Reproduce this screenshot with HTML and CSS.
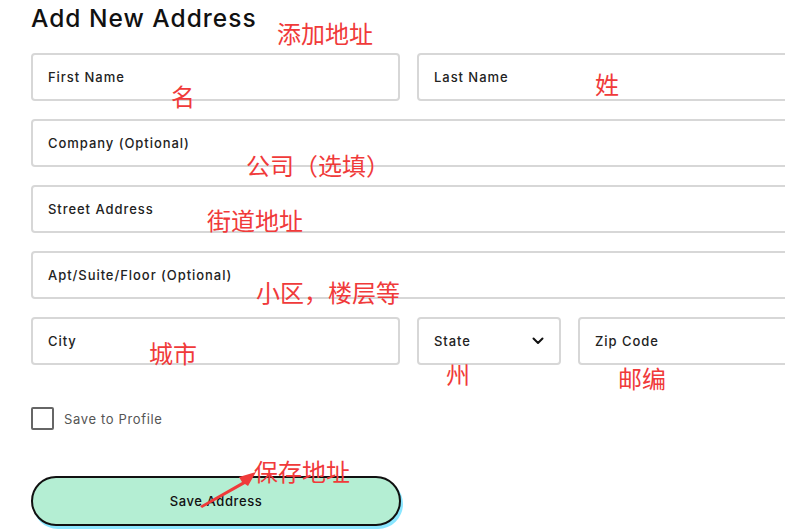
FILE: index.html
```html
<!DOCTYPE html>
<html lang="en">
<head>
<meta charset="utf-8">
<link rel="stylesheet" href="styles.css">
</head>
<body>
<div class="page">
  <h1 class="title">Add New Address</h1>
  <form class="form">
    <div class="row">
      <div class="field half"><span class="label">First Name</span></div>
      <div class="field grow"><span class="label">Last Name</span></div>
    </div>
    <div class="row">
      <div class="field grow"><span class="label">Company (Optional)</span></div>
    </div>
    <div class="row">
      <div class="field grow"><span class="label">Street Address</span></div>
    </div>
    <div class="row">
      <div class="field grow"><span class="label">Apt/Suite/Floor (Optional)</span></div>
    </div>
    <div class="row">
      <div class="field half"><span class="label">City</span></div>
      <div class="field state"><span class="label">State</span>
        <svg class="chev" width="12" height="8" viewBox="0 0 12 8"><path d="M1.5 1.5 L6 6 L10.5 1.5" fill="none" stroke="#111" stroke-width="2" stroke-linecap="round" stroke-linejoin="round"/></svg>
      </div>
      <div class="field grow"><span class="label">Zip Code</span></div>
    </div>
    <label class="check"><span class="box"></span><span class="check-label">Save to Profile</span></label>
    <div class="btn-wrap"><button type="button" class="save">Save Address</button></div>
  </form>

  <span class="note n1" lang="zh-CN">添加地址</span>
  <span class="note n2" lang="zh-CN">名</span>
  <span class="note n3" lang="zh-CN">姓</span>
  <span class="note n4" lang="zh-CN">公司<span class="paren">（</span>选填<span class="paren">）</span></span>
  <span class="note n5" lang="zh-CN">街道地址</span>
  <span class="note n6" lang="zh-CN">小区，楼层等</span>
  <span class="note n7" lang="zh-CN">城市</span>
  <span class="note n8" lang="zh-CN">州</span>
  <span class="note n9" lang="zh-CN">邮编</span>
  <span class="note n10" lang="zh-CN">保存地址</span>
  <svg class="arrow" width="70" height="45" viewBox="0 0 70 45">
    <polygon points="3,41 45,17 42,12 59,7 51,21 48,19 5,43" fill="#f03a3a"/>
  </svg>
</div>
</body>
</html>
```

FILE: styles.css
```css
* { box-sizing: border-box; }
html, body { margin: 0; padding: 0; background: #fff; overflow: hidden; }
body { width: 785px; height: 530px; font-family: "Inter", "Noto Sans", "Liberation Sans", sans-serif; color: #1a1a1a; }
.page { position: relative; width: 785px; height: 530px; overflow: hidden; padding: 4px 0 0 31px; }
.title { margin: 0; font-size: 24.5px; font-weight: 500; line-height: 29px; letter-spacing: 1px; color: #111; }
.form { width: 790px; margin-top: 20px; display: flex; flex-direction: column; gap: 18px; }
.row { display: flex; gap: 17px; }
.field { height: 48px; border: 2px solid #d7d7d7; border-radius: 4px; display: flex; align-items: center; padding: 0 15px; background: #fff; }
.grow { flex: 1; }
.half { width: 369px; flex: none; }
.state { width: 144px; flex: none; justify-content: space-between; padding-right: 15px; }
.label { font-size: 13px; font-weight: 500; color: #222; letter-spacing: 0.95px; }
.check { display: flex; align-items: center; gap: 10px; margin-top: 24px; }
.box { width: 23px; height: 23px; border: 2px solid #666; border-radius: 2px; }
.check-label { font-size: 13px; color: #555; letter-spacing: 0.65px; }
.btn-wrap { margin-top: 28px; }
.save { width: 370px; height: 50px; border: 2px solid #111; border-radius: 25px; background: #b4eed3; box-shadow: 2px 3px 0 #8ae6ff; font-family: inherit; font-size: 13px; font-weight: 500; color: #111; letter-spacing: 0.6px; padding: 0; }
.note { position: absolute; font-family: "Noto Sans CJK SC", sans-serif; font-size: 24px; line-height: 24px; color: #f03a3a; white-space: nowrap; }
.paren { display: inline-block; width: 24px; text-align: center; }
.n1 { left: 277px; top: 21px; }
.n2 { left: 171px; top: 84px; }
.n3 { left: 595px; top: 72px; }
.n4 { left: 246px; top: 153px; }
.n5 { left: 207px; top: 208px; }
.n6 { left: 256px; top: 280px; }
.n7 { left: 149px; top: 341px; }
.n8 { left: 446px; top: 362px; }
.n9 { left: 618px; top: 366px; }
.n10 { left: 254px; top: 459px; }
.arrow { position: absolute; left: 197px; top: 465px; }
```
